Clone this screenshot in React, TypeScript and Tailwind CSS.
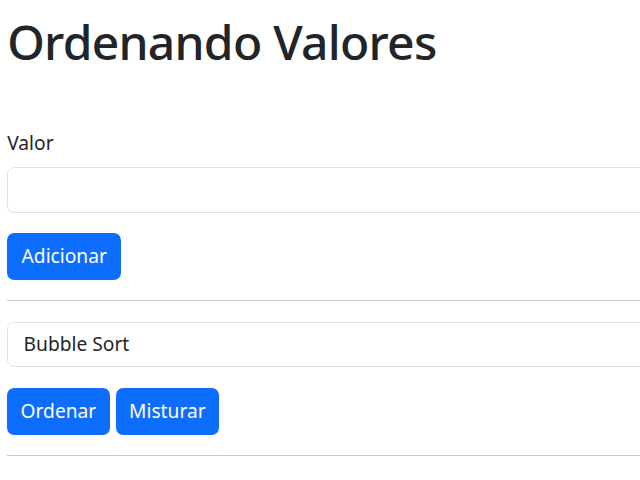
export default function App() {
  const font = { fontFamily: '"Noto Sans", "Open Sans", sans-serif' };

  return (
    <div className="w-screen h-screen overflow-hidden bg-white text-[#212529]" style={font}>
      <div className="w-[900px] px-[7.2px] pt-[13px]">
        <h1 className="text-[48px] leading-[57.6px] font-medium tracking-[-0.75px] mb-[9.6px]">Ordenando Valores</h1>

        <div className="mt-[58px]">
          <label className="block text-[19.2px] leading-[28.8px] mb-[9.6px]">Valor</label>
          <input
            type="text"
            className="block w-full h-[46px] border border-[#dee2e6] rounded-[7.2px] px-[14.4px] text-[19.2px] outline-none"
          />
        </div>

        <button className="mt-[20px] h-[46.6px] px-[14.4px] bg-[#0d6efd] text-white text-[19.2px] rounded-[7.2px] flex items-center">
          Adicionar
        </button>

        <hr className="mt-[20.5px] mb-[20.5px] border-0 border-t border-[#c9cacb]" />

        <div className="w-full h-[45px] border border-[#dee2e6] rounded-[7.2px] px-[15.4px] text-[19.2px] flex items-center">
          Bubble Sort
        </div>

        <div className="mt-[21.5px] flex gap-[6px]">
          <button className="h-[46.6px] px-[13.4px] bg-[#0d6efd] text-white text-[19.2px] rounded-[7.2px] flex items-center">
            Ordenar
          </button>
          <button className="h-[46.6px] px-[13.4px] bg-[#0d6efd] text-white text-[19.2px] rounded-[7.2px] flex items-center">
            Misturar
          </button>
        </div>

        <hr className="mt-[20.5px] border-0 border-t border-[#c9cacb]" />
      </div>
    </div>
  );
}
